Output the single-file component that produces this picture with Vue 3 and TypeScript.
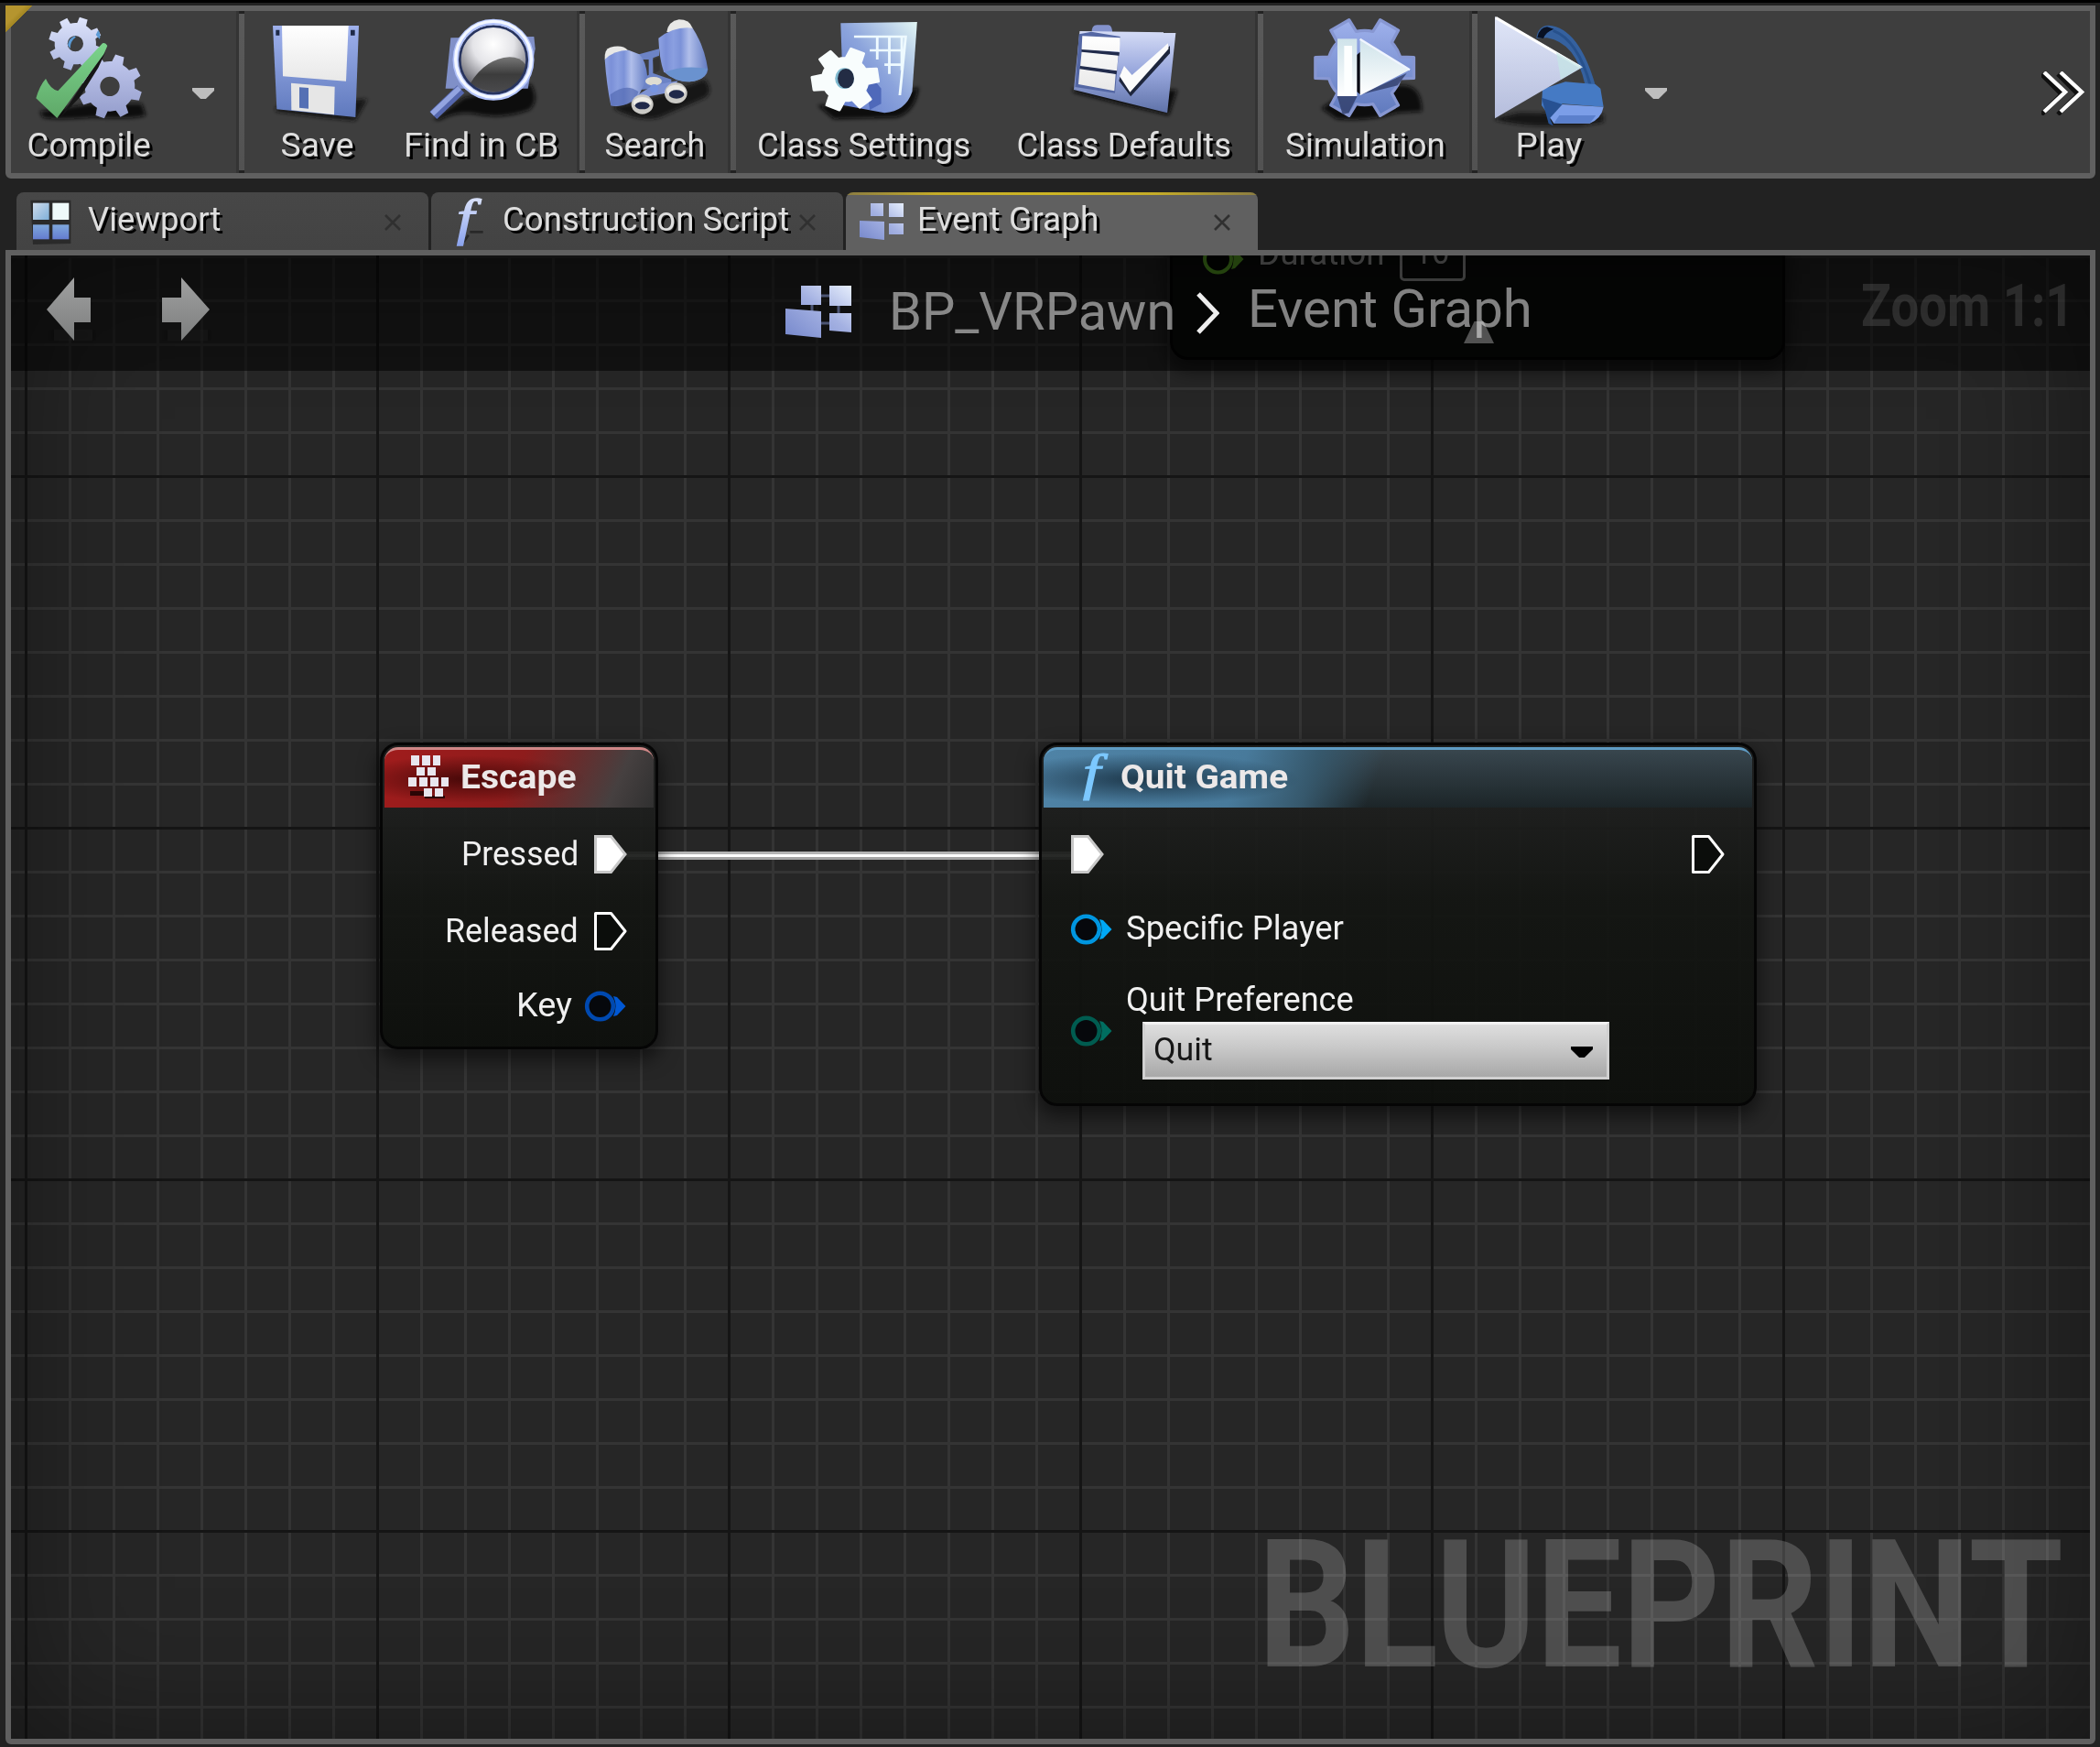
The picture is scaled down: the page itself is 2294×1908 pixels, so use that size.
<script setup lang="ts">
import type { Directive } from 'vue'

const vFit: Directive<HTMLElement, number> = {
  mounted(el, { value }) {
    el.style.transform = `scale(${value / el.offsetWidth}, 1.05)`
  },
}

function gear(cx: number, cy: number, R: number, r: number, n: number, start: number, tip: number, base: number, hole = 0): string {
  const pt = (rad: number, deg: number) => {
    const a = (deg * Math.PI) / 180
    return `${(cx + rad * Math.cos(a)).toFixed(1)} ${(cy + rad * Math.sin(a)).toFixed(1)}`
  }
  let d = ''
  for (let i = 0; i < n; i++) {
    const a = start + (360 / n) * i
    d += i === 0 ? `M${pt(r, a - base)}` : `A${r} ${r} 0 0 1 ${pt(r, a - base)}`
    d += `L${pt(R, a - tip)}L${pt(R, a + tip)}L${pt(r, a + base)}`
  }
  d += `A${r} ${r} 0 0 1 ${pt(r, start - base)}Z`
  if (hole) d += `M${cx - hole} ${cy}a${hole} ${hole} 0 1 0 ${hole * 2} 0a${hole} ${hole} 0 1 0 ${-hole * 2} 0Z`
  return d
}

const gearA = gear(247, 143, 88, 68, 8, -72, 9, 13, 26)
const gearB = gear(360, 283, 106, 82, 8, -72, 8, 13, 32)
const gearW = gear(345, 260, 102, 70, 6, -68, 12, 20)
const gearS = gear(392, 222, 165, 122, 6, 0, 12, 17)

const tabs = [
  { title: 'Viewport', icon: 'viewport', width: 145, active: false },
  { title: 'Construction Script', icon: 'fn', width: 313, active: false },
  { title: 'Event Graph', icon: 'graph', width: 199, active: true },
]
</script>

<template>
  <div class="app">
    <svg class="defs" width="0" height="0">
      <defs>
        <linearGradient id="steel" x1="0" y1="0" x2="0" y2="1"><stop offset="0" stop-color="#dfe5fb" /><stop offset="1" stop-color="#a9b4df" /></linearGradient>
        <linearGradient id="steel2" x1="0" y1="0" x2="0" y2="1"><stop offset="0" stop-color="#c3caef" /><stop offset="1" stop-color="#939ccb" /></linearGradient>
        <linearGradient id="blue" x1="0" y1="0" x2="0" y2="1"><stop offset="0" stop-color="#9fb1ec" /><stop offset="1" stop-color="#5f79bd" /></linearGradient>
        <linearGradient id="check" x1="0" y1="0" x2="0" y2="1"><stop offset="0" stop-color="#7bd48c" /><stop offset="1" stop-color="#5fa868" /></linearGradient>
        <linearGradient id="paper" x1="0" y1="0" x2="0" y2="1"><stop offset="0" stop-color="#fff" /><stop offset="1" stop-color="#e8e8e8" /></linearGradient>
        <linearGradient id="barrel" x1="0" y1="0" x2="1" y2="0"><stop offset="0" stop-color="#8ea2e2" /><stop offset=".15" stop-color="#7b90d8" /><stop offset=".3" stop-color="#8a9fe0" /><stop offset=".45" stop-color="#7c92d8" /><stop offset=".62" stop-color="#b0beea" /><stop offset="1" stop-color="#627bc2" /></linearGradient>
        <linearGradient id="sheet" x1="0" y1="1" x2="1" y2="0"><stop offset="0" stop-color="#5f79cc" /><stop offset=".5" stop-color="#8ca4dc" /><stop offset="1" stop-color="#e2f6f4" /></linearGradient>
        <linearGradient id="folder" x1="0" y1="0" x2="0" y2="1"><stop offset="0" stop-color="#d5dcf6" /><stop offset=".5" stop-color="#97a6dc" /><stop offset="1" stop-color="#5f72a8" /></linearGradient>
        <linearGradient id="playg" x1="0" y1="0" x2="0" y2="1"><stop offset="0" stop-color="#e0e6f8" /><stop offset="1" stop-color="#b5bddc" /></linearGradient>
        <linearGradient id="ice" x1="0" y1="0" x2="0" y2="1"><stop offset="0" stop-color="#cfe3ea" /><stop offset="1" stop-color="#fff" /></linearGradient>
        <linearGradient id="cell" x1="0" y1="1" x2="1" y2="0"><stop offset="0" stop-color="#7688cc" /><stop offset=".55" stop-color="#a4b1e2" /><stop offset="1" stop-color="#e6eefc" /></linearGradient>
        <linearGradient id="vp1" x1="0" y1="0" x2="1" y2="1"><stop offset="0" stop-color="#cfdcec" /><stop offset="1" stop-color="#7fb0d8" /></linearGradient>
        <linearGradient id="vp2" x1="0" y1="0" x2="0" y2="1"><stop offset="0" stop-color="#7fa8dc" /><stop offset="1" stop-color="#647cd0" /></linearGradient>
        <linearGradient id="fng" x1="0" y1="0" x2="0" y2="1"><stop offset="0" stop-color="#e8edfc" /><stop offset="1" stop-color="#8ca4ee" /></linearGradient>
        <radialGradient id="lens" cx=".5" cy=".28" r=".65"><stop offset="0" stop-color="#fff" /><stop offset=".45" stop-color="#e4e4e8" /><stop offset="1" stop-color="#62626a" /></radialGradient>
        <linearGradient id="lensd" x1="0" y1="0" x2="0" y2="1"><stop offset="0" stop-color="#777" /><stop offset=".5" stop-color="#3c3c3c" /><stop offset="1" stop-color="#4a4a4c" /></linearGradient>
        <linearGradient id="nav" x1="0" y1="0" x2="0" y2="1"><stop offset="0" stop-color="#a0a0a0" /><stop offset="1" stop-color="#7c7e7e" /></linearGradient>
        <filter id="soft" x="-30%" y="-50%" width="160%" height="200%"><feGaussianBlur stdDeviation="6" /></filter>
      </defs>
    </svg>

    <header class="toolbar">
      <button class="tool compile">
        <svg viewBox="111 36 360 360">
          <path d="M130 365L300 340H465L478 378Q440 392 300 385Q180 395 140 385Z" fill="#0d0d0d" filter="url(#soft)" />
          <path :d="gearA" fill="url(#steel)" fill-rule="evenodd" />
          <path :d="gearB" fill="url(#steel2)" fill-rule="evenodd" />
          <path d="M322 98Q332 115 326 128L314 114ZM222 148Q226 124 246 118L248 122Q230 134 230 160Z" fill="#5a9ad4" />
          <path d="M330 185L345 172L322 222L262 318L196 388Z" fill="#161616" />
          <path d="M150 258Q165 292 190 298L336 142Q345 138 352 150L340 178L187 387L118 322Q130 280 150 258Z" fill="url(#check)" />
        </svg>
        <span v-fit="135">Compile</span>
      </button>
      <i class="drop" />
      <i class="sep" />
      <button class="tool save">
        <svg viewBox="859 36 360 360">
          <path d="M905 350L1205 325L1165 395L1060 385L905 365Z" fill="#151515" filter="url(#soft)" />
          <path d="M895 84H1177L1166 384L908 358Z" fill="url(#blue)" />
          <path d="M905 98h12v18h-12zM1150 98h14v18h-14z" fill="#1f2a48" />
          <path d="M925 84H1143L1135 266L928 250Z" fill="url(#paper)" />
          <path d="M955 272L1098 284L1096 376L956 361Z" fill="#e6e6e6" />
          <path d="M982 286L1012 288V356L982 353Z" fill="#5570b4" />
        </svg>
        <span v-fit="80">Save</span>
      </button>
      <button class="tool find">
        <svg viewBox="138 36 360 360">
          <path d="M160 392L260 320L480 275Q510 330 475 360Q380 395 290 372Q230 365 180 394Z" fill="#0c0c0c" filter="url(#soft)" />
          <path d="M217 124L490 120L494 160L470 290H200Z" fill="#8090c8" />
          <path d="M250 292L160 378" stroke="#5567ae" stroke-width="34" />
          <path d="M246 288L156 373" stroke="#93a4e0" stroke-width="17" />
          <circle cx="357" cy="196" r="116" fill="url(#lens)" />
          <path d="M280 275Q330 192 410 187Q445 187 463 212Q455 270 410 292Q350 315 280 275Z" fill="url(#lensd)" />
          <circle cx="357" cy="196" r="110" fill="none" stroke="#27345f" stroke-width="8" />
          <circle cx="357" cy="196" r="124" fill="none" stroke="#b2c3fb" stroke-width="19" />
          <circle cx="357" cy="194" r="124" fill="none" stroke="#f4f8ff" stroke-width="10" />
        </svg>
        <span v-fit="169">Find in CB</span>
      </button>
      <i class="sep s2" />
      <button class="tool search">
        <svg viewBox="705 36 360 360">
          <path d="M750 350L850 330L1050 260Q1080 300 1050 320L900 385Q840 400 760 360Z" fill="#161616" filter="url(#soft)" />
          <path d="M826 180L900 160V182L880 190V240L940 260V285L830 295V265L866 245V195L826 195Z" fill="#6c83c6" />
          <path d="M880 196L902 186V230L884 240Z" fill="#333" />
          <path d="M722 195Q720 160 740 155Q780 145 798 165L760 185Z" fill="#e8e8e6" />
          <path d="M925 105Q930 70 965 64Q1000 64 1010 92L970 110Z" fill="#e8e8e6" />
          <path d="M722 195Q750 165 800 164L835 178Q858 200 862 255L832 315Q790 355 742 346Q728 280 722 195Z" fill="url(#barrel)" />
          <path d="M898 125Q950 85 1010 92Q1048 150 1060 228Q1055 262 1000 268Q950 268 915 235Q900 190 898 125Z" fill="url(#barrel)" />
          <path d="M740 310Q790 270 832 300L825 325Q790 352 742 346Z" fill="#546bb4" opacity=".7" />
          <path d="M920 236Q980 212 1058 225Q1055 262 1000 268Q950 268 920 236Z" fill="#6a92cf" />
          <path d="M815 320L880 280L960 265L950 300L870 315L850 340Z" fill="#7e93d4" />
          <ellipse cx="882" cy="266" rx="27" ry="14" fill="#dedcd2" />
          <circle cx="884" cy="290" r="14" fill="#7794df" />
          <ellipse cx="845" cy="342" rx="36" ry="32" fill="#cbcac6" /><ellipse cx="845" cy="336" rx="30" ry="18" fill="#ecebe6" /><ellipse cx="845" cy="346" rx="24" ry="12" fill="#20294a" />
          <ellipse cx="955" cy="305" rx="37" ry="34" fill="#cbcac6" /><ellipse cx="955" cy="298" rx="31" ry="20" fill="#ecebe6" /><ellipse cx="957" cy="309" rx="25" ry="14" fill="#20294a" />
        </svg>
        <span v-fit="110">Search</span>
      </button>
      <i class="sep s3" />
      <button class="tool settings">
        <svg viewBox="235 36 336 360" preserveAspectRatio="none">
          <path d="M260 345L420 340L570 285Q560 370 500 385L310 390Z" fill="#080808" filter="url(#soft)" />
          <path d="M331 76L565 72L550 300Q530 365 465 370L340 345Z" fill="url(#sheet)" />
          <path d="M372 120H530L512 312M420 165H526M465 212H520M443 120V195M480 120V242M518 120V230" fill="none" stroke="#eefaff" stroke-width="8" />
          <path d="M410 280L440 270L455 290V340L420 360Z" fill="#4f69ba" />
          <path :d="gearW" fill="#f8fdfd" stroke="#f8fdfd" stroke-width="8" stroke-linejoin="round" />
          <ellipse cx="343" cy="257" rx="29" ry="34" fill="#7fb9cf" />
          <ellipse cx="347" cy="257" rx="25" ry="32" fill="#232c44" />
        </svg>
        <span v-fit="233">Class Settings</span>
      </button>
      <button class="tool defaults">
        <svg viewBox="1030 36 336 360" preserveAspectRatio="none">
          <path d="M1042 290L1360 295L1335 378L1180 340L1042 302Z" fill="#101010" filter="url(#soft)" />
          <path d="M1098 110Q1098 82 1115 82H1150Q1162 84 1162 110Z" fill="#8493cd" />
          <path d="M1062 102L1356 106L1330 370L1044 294Z" fill="url(#folder)" />
          <path d="M1060 112L1098 104L1186 120L1170 305L1048 285Z" fill="#5467a4" />
          <path d="M1068 160L1184 172L1182 184L1068 172ZM1064 214L1176 232L1174 244L1062 228Z" fill="#222c4c" />
          <path d="M1070 118L1186 124L1184 170L1068 162ZM1068 170L1180 182L1176 232L1064 216ZM1062 226L1172 243L1168 298L1058 276Z" fill="url(#paper)" />
          <path d="M1190 235L1222 262L1338 150V175L1218 316L1182 265Z" fill="#1e263c" />
          <path d="M1198 216L1222 246L1332 142L1334 160L1216 302L1184 250Z" fill="#fbfbfb" />
        </svg>
        <span v-fit="235">Class Defaults</span>
      </button>
      <i class="sep" />
      <button class="tool sim">
        <svg viewBox="213 36 360 360">
          <path d="M250 355L330 300L500 280Q580 270 580 365L500 370Q400 400 300 390Z" fill="#0f0f0f" filter="url(#soft)" />
          <path :d="gearS" fill="url(#blue)" stroke="#8797d2" stroke-width="10" stroke-linejoin="round" />
          <path d="M302 315H368L340 370L320 375ZM378 310L530 240L500 280Z" fill="#2c3862" opacity=".75" />
          <path d="M366 180V300L378 310V170Z" fill="#080a14" />
          <rect x="303" y="127" width="64" height="188" fill="url(#ice)" />
          <rect x="325" y="150" width="26" height="155" fill="#fdffff" />
          <path d="M377 128L540 229L377 313Z" fill="url(#ice)" />
          <path d="M377 128L540 229" stroke="#f0f5ff" stroke-width="7" />
        </svg>
        <span v-fit="175">Simulation</span>
      </button>
      <i class="sep s4" />
      <button class="tool play">
        <svg viewBox="816 36 360 360">
          <path d="M820 388L900 370L1175 375V400L1100 412H960Q880 408 820 392Z" fill="#141414" filter="url(#soft)" />
          <path d="M955 125Q960 84 995 83Q1095 90 1150 285L1115 280Q1085 140 990 124Z" fill="#35619f" />
          <path d="M958 122Q965 90 990 88L1012 95Q985 105 978 126Z" fill="#081022" />
          <path d="M1010 100Q1090 130 1132 280" fill="none" stroke="#27518c" stroke-width="9" />
          <path d="M975 292L1050 268L1148 276L1165 290L1175 350L1040 340L1000 385L972 345Z" fill="#457ac4" />
          <path d="M972 320L1040 342L1000 390L1010 412L995 405Z" fill="#275192" />
          <path d="M1040 342L1175 350Q1168 388 1130 404H1012L1000 386Z" fill="#7b9ee8" />
          <path d="M1012 404L1030 378H1150L1130 404Z" fill="#5b80cc" />
          <path d="M819 54L1107 220L819 388Z" fill="url(#playg)" />
          <path d="M822 58L1098 219" stroke="#fff" stroke-width="9" />
          <path d="M1020 172L1105 220L1035 260Z" fill="#c5e6e6" opacity=".7" />
        </svg>
        <span v-fit="73">Play</span>
      </button>
      <i class="drop d2" />
      <svg class="more" viewBox="0 0 48 48">
        <path d="M0 3L22 25L0 47M18 3L40 25L18 47" fill="none" stroke="#101010" stroke-width="5" />
        <path d="M3 1L26 22.5L3 44M21 1L44 22.5L21 44" fill="none" stroke="#fff" stroke-width="4.4" />
      </svg>
    </header>

    <nav class="tabs">
      <div v-for="t in tabs" :key="t.title" class="tab" :class="{ active: t.active }">
        <svg v-if="t.icon === 'viewport'" class="ticon" viewBox="99 84 144 144">
          <path d="M100 86H232V228L108 231Z" fill="#222" opacity=".75" />
          <rect x="108" y="95" width="53" height="55" fill="url(#vp1)" /><rect x="172" y="95" width="54" height="55" fill="#effafa" />
          <rect x="108" y="166" width="53" height="48" fill="url(#vp2)" /><rect x="172" y="166" width="54" height="48" fill="url(#vp2)" />
        </svg>
        <svg v-else-if="t.icon === 'fn'" class="ticon" viewBox="78 84 144 144">
          <path d="M160 190H203M155 200L140 222" stroke="#282828" stroke-width="8" />
          <text transform="translate(117 197) scale(1.25 1)" class="fn" fill="url(#fng)" stroke="url(#fng)" stroke-width="4">f</text>
        </svg>
        <svg v-else class="ticon" viewBox="0 0 48 48">
          <path d="M12 4H26V18H12ZM32 4H48V19H32ZM32 26H48V38H32ZM0 23L27 24V44L0 41Z" fill="url(#cell)" />
        </svg>
        <div class="tlabel"><span v-fit="t.width">{{ t.title }}</span></div>
        <svg class="close" viewBox="0 0 18 18"><path d="M1 1L17 17M17 1L1 17" stroke="#303030" stroke-width="2.6" /></svg>
      </div>
    </nav>

    <main class="graph">
      <div class="wire" />

      <section class="node delay">
        <div class="row">
          <svg class="pin" viewBox="0 0 44 34"><circle cx="16.5" cy="17" r="14.5" fill="#050805" stroke="#5fae27" stroke-width="4" /><path d="M31 6Q36 17 31 28L35 27L44.5 17L35 7Z" fill="#5fae27" /></svg>
          <span v-fit="139" class="dur">Duration</span>
          <div class="num"><span v-fit="38">10</span></div>
        </div>
        <i class="expand" />
      </section>

      <section class="node escape">
        <header>
          <svg class="keys" viewBox="0 0 45 47">
            <path d="M3 39h16v5H3zM19 44h22v3H19z" fill="#2b0505" />
            <path d="M4 0h9v11H4zM16 0h9v11h-9zM28 0h8v11h-8zM10 13h9v9h-9zM22 13h9v9h-9zM1 24h9v10H1zM13 24h9v10h-9zM25 24h9v10h-9zM37 24h8v10h-8zM18 36h9v9h-9zM30 36h9v9h-9z" fill="#e8e6ee" />
          </svg>
          <span v-fit="126">Escape</span>
        </header>
        <div class="pins">
          <div class="row"><span v-fit="128">Pressed</span><svg class="exec" viewBox="0 0 36 42"><path d="M1.5 1.5H18.5L34 21L18.5 40.5H1.5Z" fill="#fff" stroke="#c8c8c8" stroke-width="3" /></svg></div>
          <div class="row"><span v-fit="146">Released</span><svg class="exec" viewBox="0 0 36 42"><path d="M1.5 1.5H18.5L34 21L18.5 40.5H1.5Z" fill="#0b0d0b" stroke="#fff" stroke-width="3" stroke-linejoin="round" /></svg></div>
          <div class="row key"><span v-fit="61">Key</span><svg class="pin" viewBox="0 0 44 34"><circle cx="16.5" cy="17" r="14.3" fill="#06080c" stroke="#0049b0" stroke-width="4.6" /><path d="M31 6Q36 17 31 28L35 27L44.5 17L35 7Z" fill="#0058d4" /></svg></div>
        </div>
      </section>

      <section class="node quit">
        <header>
          <svg class="fnicon" viewBox="0 0 42 48"><text transform="translate(10 37) scale(1.27 1)" class="fn2" fill="#7cc8ff" stroke="#7cc8ff" stroke-width="1.200">f</text></svg>
          <span v-fit="183">Quit Game</span>
        </header>
        <div class="pins">
          <div class="row wide">
            <svg class="exec" viewBox="0 0 36 42"><path d="M1.5 1.5H18.5L34 21L18.5 40.5H1.5Z" fill="#fff" stroke="#c8c8c8" stroke-width="3" /></svg>
            <svg class="exec" viewBox="0 0 36 42"><path d="M1.5 1.5H18.5L34 21L18.5 40.5H1.5Z" fill="#0b0d0b" stroke="#fff" stroke-width="3" stroke-linejoin="round" /></svg>
          </div>
          <div class="row player">
            <svg class="pin" viewBox="0 0 44 34"><circle cx="16.5" cy="17" r="14.3" fill="#06080c" stroke="#0096e0" stroke-width="4.6" /><path d="M31 6Q36 17 31 28L35 27L44.5 17L35 7Z" fill="#00a8f6" /></svg>
            <span v-fit="238">Specific Player</span>
          </div>
          <div class="row pref">
            <svg class="pin" viewBox="0 0 44 34"><circle cx="16.5" cy="17" r="14.3" fill="#06080c" stroke="#005c50" stroke-width="4.6" /><path d="M31 6Q36 17 31 28L35 27L44.5 17L35 7Z" fill="#006e60" /></svg>
            <div class="stack">
              <span v-fit="249">Quit Preference</span>
              <div class="select"><span v-fit="65">Quit</span><i /></div>
            </div>
          </div>
        </div>
      </section>

      <div class="vignette" />
      <div class="crumbs">
        <svg class="arrow left" viewBox="0 0 54 72"><path d="M8 60h42v6H8z" fill="#1a1a1a" filter="url(#soft)" /><path d="M30 0V22H48V49H30V69L0 35Z" fill="url(#nav)" /></svg>
        <svg class="arrow right" viewBox="0 0 54 72"><path d="M6 60h44v6H6z" fill="#1a1a1a" filter="url(#soft)" /><path d="M21 0V22H0V49H21V69L52 35Z" fill="url(#nav)" /></svg>
        <svg class="bpicon" viewBox="0 0 72 57"><path d="M36 11H48M38 41H48M29 20V30M58 20V30" stroke="#4c5574" stroke-width="3" /><path d="M17 0H39V21H17ZM48 0H72V22H48ZM48 30H72V51L48 49ZM0 25L39 28V57L0 53Z" fill="url(#cell)" /></svg>
        <div class="c1"><span v-fit="313">BP_VRPawn</span></div>
        <svg class="chev" viewBox="0 0 26 46"><path d="M3 2L23 23L3 44" fill="none" stroke="#eee" stroke-width="5" /></svg>
        <span v-fit="311" class="c2">Event Graph</span>
        <span v-fit="232" class="zoom">Zoom 1:1</span>
      </div>
      <div class="watermark"><span v-fit="880">BLUEPRINT</span></div>
    </main>
  </div>
</template>

<style>
html, body { margin: 0; background: #222; overflow: hidden; }
</style>

<style scoped>
.app { width: 2294px; height: 1908px; box-sizing: border-box; padding: 0 5px 3px 6px; border-top: 3px solid #000; background: #222; font: 36px/40px Roboto, sans-serif; color: #dedede; display: flex; flex-direction: column; overflow: hidden; }
.app * { box-sizing: border-box; }
.defs { position: absolute; }
span { display: inline-block; white-space: nowrap; flex: none; }
i { display: block; flex: none; }

.toolbar { position: relative; flex: none; margin-top: 3px; height: 189px; border: 6px solid #606060; border-radius: 0 0 6px 6px; background: #3e3e3e; display: flex; align-items: flex-start; }
.toolbar::before { content: ''; position: absolute; left: -6px; top: -6px; width: 30px; height: 30px; background: linear-gradient(135deg, #b5952f 0 35%, #a08421 50%, transparent 50%); }
.tool { flex: none; border: 0; padding: 0; margin: 0; background: none; font: inherit; color: inherit; display: flex; flex-direction: column; align-items: center; height: 177px; text-shadow: 3px 3px 0 #000; }
.tool svg { position: relative; width: 120px; height: 120px; margin-bottom: 6px; overflow: visible; }
.compile { width: 170px; }
.save { width: 158px; }
.find { width: 202px; }
.search { width: 152px; }
.settings { width: 280px; }
.defaults { width: 287px; }
.sim { width: 222px; }
.play { width: 156px; }
.sep { width: 9px; height: 177px; background: linear-gradient(#222 0 3px, #5a5a5a 3px, #525252 174px, #222 174px) 3px 0 / 6px 177px no-repeat, #343434; }
.s2 { margin-left: 3px; }
.s3 { margin-left: 4px; }
.s4 { margin-left: 3px; }
.drop { width: 24px; height: 12px; margin: 84px 24px 0 28px; background: #bebebe; clip-path: polygon(0 0, 100% 0, 100% 25%, 62% 100%, 38% 100%, 0 25%); }
.d2 { margin-left: 27px; }
.more { width: 48px; height: 48px; margin: 66px 5px 0 auto; }

.tabs { flex: none; display: flex; gap: 3px; margin: 15px 0 0 12px; height: 63px; }
.tab { width: 450px; height: 63px; padding: 0 30px 0 15px; background: linear-gradient(#474747, #434343); border-radius: 8px 8px 0 0; display: flex; align-items: flex-start; text-shadow: 3px 3px 0 #000; }
.tab.active { background: linear-gradient(90deg, #8a7c42, #c5ac28 22%, #cdb524 50%, #c5ac28 75%, #8a7c42) 0 0 / 100% 3px no-repeat, #606060; }
.ticon { flex: none; width: 48px; height: 48px; margin: 8px 15px 0 0; overflow: visible; text-shadow: none; }
.tlabel { flex: none; width: 310px; height: 54px; margin: 9px 14px 0 0; }
.tlabel span { transform-origin: 0 50%; }
.close { flex: none; width: 18px; height: 18px; margin-top: 24px; }
.fn { font: italic 163px 'Liberation Serif', serif; }

.graph { position: relative; flex: none; width: 2283px; height: 1632px; border: 6px solid #606060; border-radius: 0 0 6px 6px; overflow: hidden; color: #f0f0f0;
  background:
    linear-gradient(90deg, #151515 3px, transparent 3px) 15px 0 / 384px 384px,
    linear-gradient(#151515 3px, transparent 3px) 0 240px / 384px 384px,
    linear-gradient(90deg, #343434 3px, transparent 3px) 15px 0 / 48px 48px,
    linear-gradient(#343434 3px, transparent 3px) 0 0 / 48px 48px,
    #262626; }
.vignette { position: absolute; inset: 0; box-shadow: inset 0 0 150px rgba(0, 0, 0, .42); pointer-events: none; }
.wire { position: absolute; left: 672px; top: 651px; width: 490px; height: 9px; background: linear-gradient(#b4b4b4 0 3px, #fff 3px 6px, #a4a4a4 6px); }

.node { position: absolute; border: 3px solid #050505; border-radius: 20px; padding: 2px; background: linear-gradient(rgba(29, 30, 29, .93) 70px, rgba(19, 21, 18, .93) 170px, rgba(13, 15, 12, .95)); box-shadow: 0 9px 20px 3px rgba(0, 0, 0, .5); }
.node header { height: 66px; border-radius: 15px 15px 0 0; display: flex; align-items: flex-start; font-weight: 700; color: #ece8e8; }
.row { display: flex; align-items: center; height: 42px; }
.exec { width: 36px; height: 42px; flex: none; }
.pin { width: 44px; height: 34px; flex: none; overflow: visible; }

.escape { left: 403px; top: 532px; width: 304px; height: 335px; }
.escape header { padding: 6px 0 0 25px; border-top: 3px solid #cf8787; background: radial-gradient(ellipse 130px 26px at 90px 32px, rgba(40, 0, 0, .7), transparent), linear-gradient(115deg, #a01c1c 0, #8e1c1c 48%, #682c2c 66%, #464040 84%, #303030); }
.keys { width: 45px; height: 47px; margin-right: 13px; }
.escape header span { margin-top: 3px; transform-origin: 0 50%; }
.escape .pins { padding: 30px 29px 0 0; display: flex; flex-direction: column; gap: 42px; }
.escape .row { justify-content: flex-end; }
.escape .row span { transform-origin: 100% 50%; margin: -2px 17px 0 0; }
.escape .row.key { margin-top: -2px; }
.row.key .pin { margin-right: 2px; }
.escape .row.key span { margin: -5px 14px 0 0; }

.quit { left: 1123px; top: 532px; width: 784px; height: 397px; }
.quit header { border-top: 3px solid #5f9cc4; padding: 6px 0 0 33px; background: radial-gradient(ellipse 170px 28px at 110px 32px, rgba(14, 32, 46, .75), transparent), linear-gradient(110deg, #4f83a6 0, #487a9b 28%, #36586c 38%, rgba(40, 54, 62, 0) 47%), linear-gradient(#38464e, #1c2528); }
.fnicon { width: 42px; height: 48px; margin-right: 9px; overflow: visible; }
.fn2 { font: italic 54px 'Liberation Serif', serif; }
.quit header span { margin-top: 3px; transform-origin: 0 50%; }
.quit .pins { padding: 30px 30px 0; }
.wide { justify-content: space-between; }
.player { margin-top: 40px; }
.quit .row span { transform-origin: 0 50%; }
.player span { margin: -5px 0 0 16px; }
.quit .row.pref { height: 106px; margin-top: 37px; }
.stack { display: flex; flex-direction: column; align-items: flex-start; margin-left: 16px; }
.stack > span { line-height: 36px; }
.select { margin: 7px 0 0 18px; width: 510px; height: 63px; border: 3px solid #d0d0d0; border-top-color: #f2f2f2; background: linear-gradient(#dedede, #c8c8c8 45%, #a8a8a8); display: flex; align-items: flex-start; justify-content: space-between; padding: 7px 15px 0 9px; color: #161616; font-size: 33px; }
.select i { width: 24px; height: 12px; margin-top: 17px; background: #000; clip-path: polygon(0 0, 100% 0, 100% 25%, 62% 100%, 38% 100%, 0 25%); }

.delay { left: 1266px; top: -120px; width: 672px; height: 234px; background: #0b0d0b; }
.delay .row { margin: 95px 0 0 31px; height: 48px; color: #a0a0a0; }
.delay .dur { margin: -14px 19px 0 16px; transform-origin: 0 50%; }
.delay .num { width: 72px; height: 60px; margin-top: -12px; border: 3px solid #999; border-radius: 5px; display: flex; justify-content: center; padding-top: 6px; }
.delay .expand { width: 33px; height: 24px; margin: 44px 0 0 316px; background: #bbb; clip-path: polygon(35% 0, 65% 0, 100% 100%, 0 100%); }

.crumbs { position: absolute; left: 0; top: 0; width: 2271px; height: 126px; background: rgba(0, 0, 0, .54); display: flex; align-items: flex-start; font-size: 54px; line-height: 64px; color: rgba(255, 255, 255, .5); }
.crumbs span { transform-origin: 0 50%; }
.arrow { width: 54px; height: 72px; flex: none; }
.left { margin: 24px 0 0 39px; }
.right { margin: 24px 0 0 72px; }
.bpicon { width: 72px; height: 57px; flex: none; margin: 33px 0 0 627px; }
.c1 { flex: none; width: 311px; margin: 30px 0 0 41px; }
.chev { width: 26px; height: 46px; flex: none; margin: 40px 0 0 24px; }
.c2 { margin: 27px 0 0 31px; }
.crumbs .zoom { margin: 23px 18px 0 auto; font-size: 61px; font-weight: 700; color: rgba(255, 255, 255, .12); transform-origin: 100% 50%; }
.watermark { position: absolute; right: 29px; bottom: 36px; font-size: 186px; line-height: 220px; font-weight: 700; color: rgba(255, 255, 255, .19); }
.watermark span { transform-origin: 100% 50%; }
</style>
